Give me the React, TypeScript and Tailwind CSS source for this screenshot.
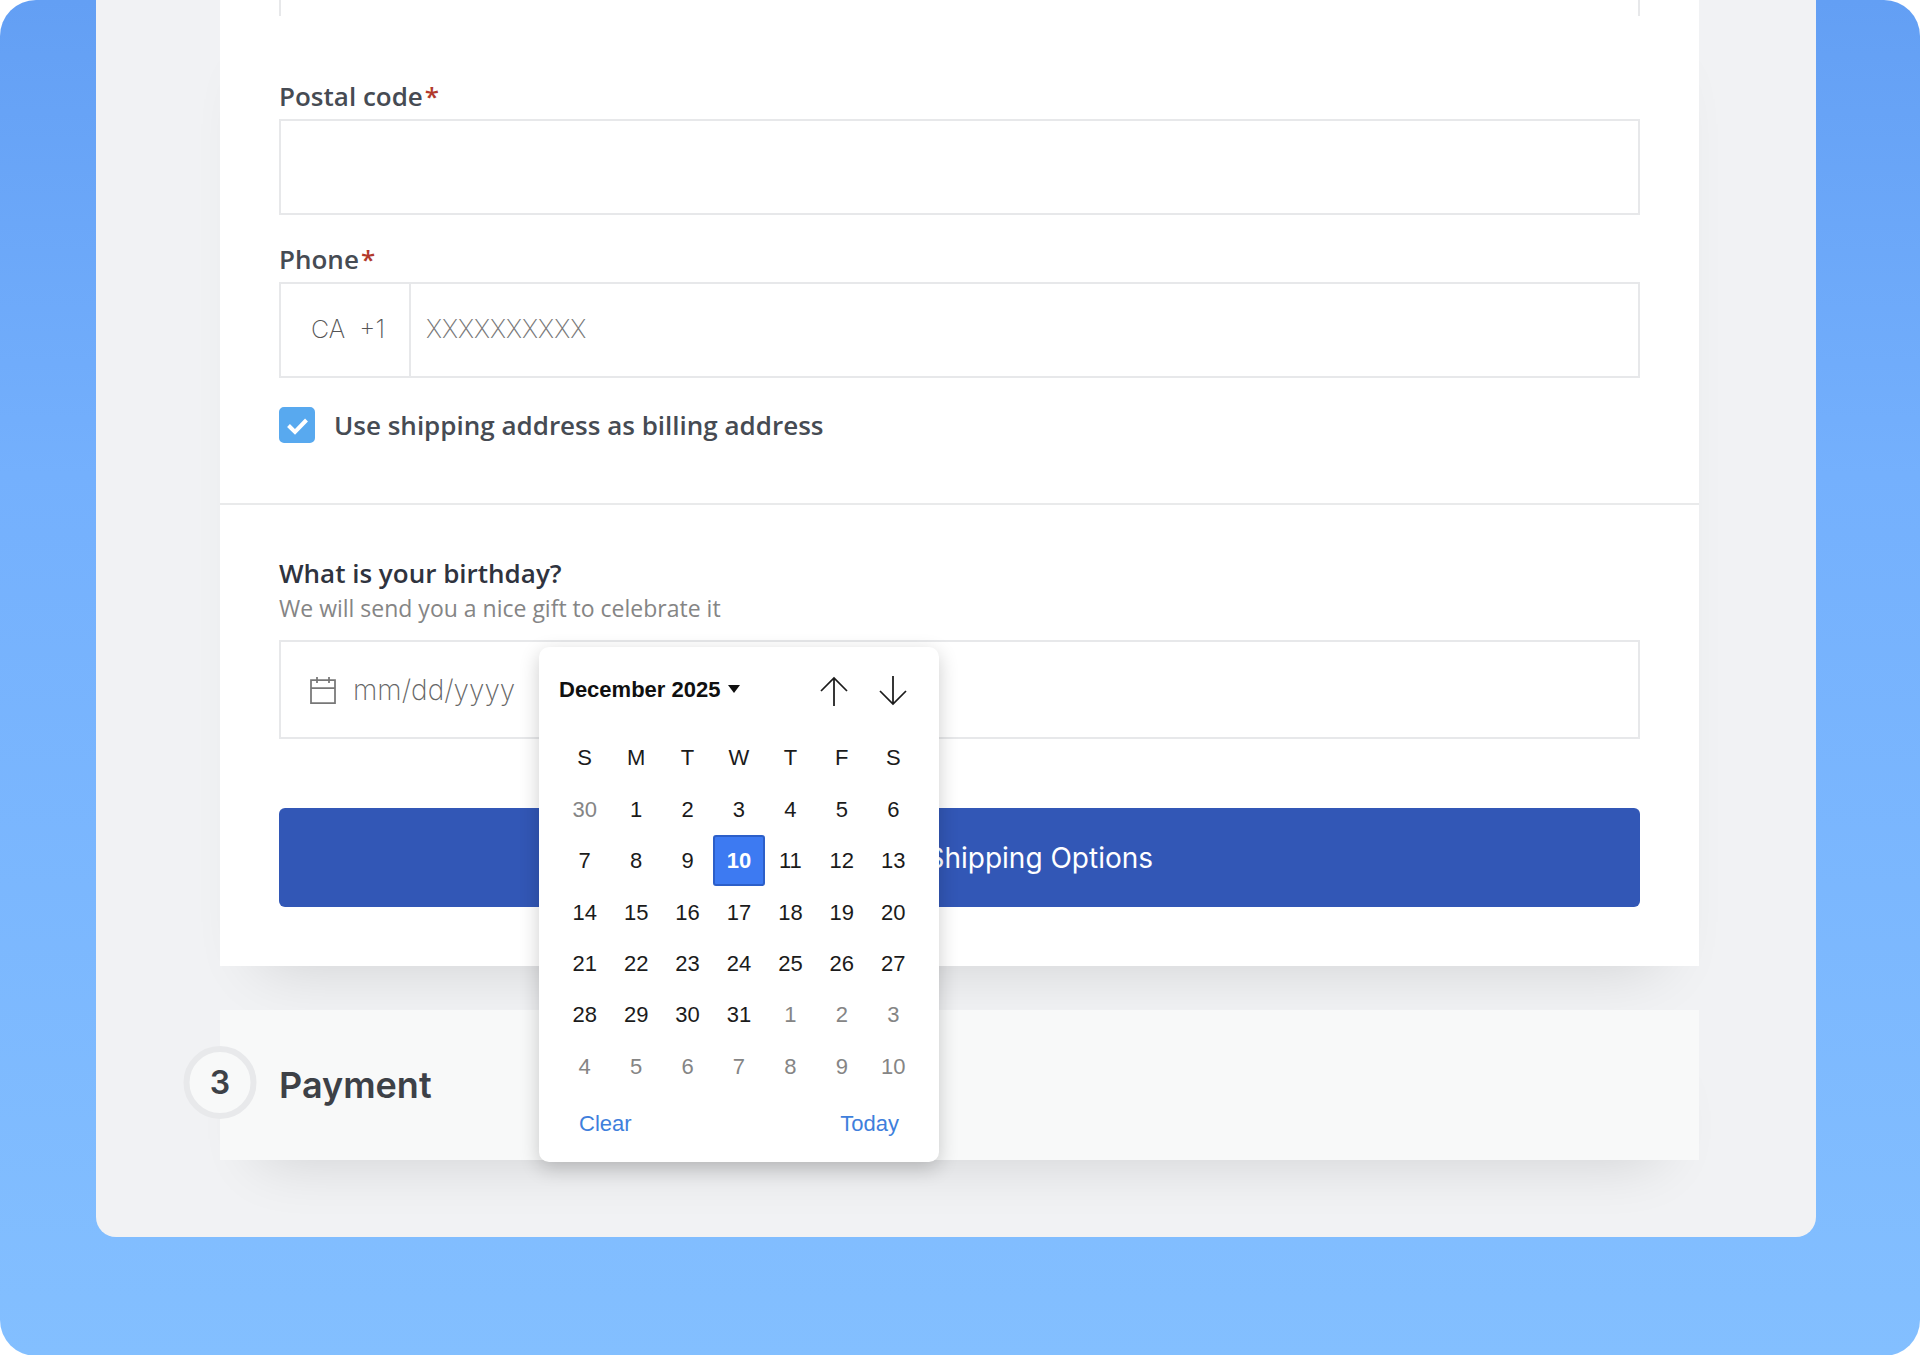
import { useState } from 'react';

const WEEKDAYS = ['S', 'M', 'T', 'W', 'T', 'F', 'S'];

const WEEKS = [
  [30, 1, 2, 3, 4, 5, 6],
  [7, 8, 9, 10, 11, 12, 13],
  [14, 15, 16, 17, 18, 19, 20],
  [21, 22, 23, 24, 25, 26, 27],
  [28, 29, 30, 31, 1, 2, 3],
  [4, 5, 6, 7, 8, 9, 10],
];

// leading days belong to November, trailing ones to January
function isOutside(week: number, day: number) {
  return (week === 0 && day > 7) || (week >= 4 && day < 15);
}

type FieldLabelProps = {
  htmlFor: string;
  text: string;
};

function FieldLabel({ htmlFor, text }: FieldLabelProps) {
  return (
    <label htmlFor={htmlFor} className="flex h-9 items-center gap-0.5 text-[26px] leading-9 font-semibold text-[#464b53]">
      <span>{text}</span>
      <span className="text-[#b23a2c]" aria-hidden="true">
        *
      </span>
    </label>
  );
}

function DatePicker() {
  const [selected, setSelected] = useState('1-10');

  return (
    <div
      role="dialog"
      aria-label="Choose date"
      className="absolute top-[7px] left-[260px] z-10 w-[400px] rounded-[10px] bg-white px-5 pb-5 font-['Liberation_Sans',Arial,sans-serif] text-[22px] text-[#1b1b1b] shadow-[0_6px_20px_rgba(0,0,0,0.2)]"
    >
      <div className="flex h-[84px] items-center justify-between">
        <button type="button" className="flex items-center gap-2 font-bold text-[#101010]">
          December 2025
          <svg width="12" height="8" viewBox="0 0 12 8" fill="currentColor" aria-hidden="true">
            <path d="M0 0h12L6 8z" />
          </svg>
        </button>
        <div className="flex gap-[31px] pt-1 pr-3">
          <button type="button" aria-label="Previous month">
            <svg width="28" height="30" viewBox="0 0 28 30" fill="none" stroke="currentColor" strokeWidth="1.75" aria-hidden="true">
              <path d="M14 30V2M1 15 14 2l13 13" />
            </svg>
          </button>
          <button type="button" aria-label="Next month">
            <svg width="28" height="30" viewBox="0 0 28 30" fill="none" stroke="currentColor" strokeWidth="1.75" aria-hidden="true">
              <path d="M14 0v28M1 15l13 13 13-13" />
            </svg>
          </button>
        </div>
      </div>

      <table className="h-[361px] w-full table-fixed border-collapse text-center">
        <thead>
          <tr className="h-[53px]">
            {WEEKDAYS.map((name, i) => (
              <th key={i} scope="col" className="p-0 font-normal">
                {name}
              </th>
            ))}
          </tr>
        </thead>
        <tbody>
          {WEEKS.map((days, week) => (
            <tr key={week} className="h-[51px]">
              {days.map((day) => {
                const id = `${week}-${day}`;
                const tone = isOutside(week, day) ? 'text-[#858585]' : '';
                const active = 'rounded-[3px] border-2 border-[#2c5fc9] bg-[#3d7af2] font-bold text-white';
                return (
                  <td key={id} className="p-0">
                    <button
                      type="button"
                      onClick={() => setSelected(id)}
                      className={`h-[51px] w-full ${selected === id ? active : tone}`}
                    >
                      {day}
                    </button>
                  </td>
                );
              })}
            </tr>
          ))}
        </tbody>
      </table>

      <div className="flex h-[50px] items-center justify-between px-5 pt-3 text-[#3f7fdc]">
        <button type="button">Clear</button>
        <button type="button">Today</button>
      </div>
    </div>
  );
}

export default function App() {
  const [sameAddress, setSameAddress] = useState(true);

  return (
    <div className="bg-white font-['Open_Sans','Noto_Sans',sans-serif]">
      <div className="min-h-screen rounded-[36px] bg-linear-to-b from-[#639ff4] via-[#74b0fd] via-35% to-[#83bfff] pr-[104px] pb-[119px] pl-24">
        <main className="rounded-b-[20px] bg-[#f1f2f4] pr-[117px] pb-[77px] pl-[124px]">
          <section className="bg-white pb-[59px] shadow-[0_40px_60px_-40px_rgba(0,0,0,0.14)]">
            <div className="px-[59px] pb-[60px]">
              <div className="h-4 border-x-2 border-[#e7e8ea]" />

              <div className="pt-[62px]">
                <FieldLabel htmlFor="postal" text="Postal code" />
                <input
                  id="postal"
                  type="text"
                  className="mt-[5px] block h-24 w-full border-2 border-[#e7e8ea] px-4 text-[26px] outline-none"
                />
              </div>

              <div className="pt-[26px]">
                <FieldLabel htmlFor="phone" text="Phone" />
                <div className="mt-[5px] flex h-24 border-2 border-[#e7e8ea] font-['Inter',sans-serif] text-[25px] font-extralight text-[#555]">
                  <div className="flex w-[130px] items-center justify-between border-r-2 border-[#e7e8ea] pr-6 pl-[30px]">
                    <span>CA</span>
                    <span>+1</span>
                  </div>
                  <input
                    id="phone"
                    type="tel"
                    placeholder="XXXXXXXXXX"
                    className="min-w-0 flex-1 px-[15px] outline-none placeholder:text-[#777]"
                  />
                </div>
              </div>

              <label className="mt-[29px] flex items-center gap-[19px] text-[26px] leading-9 font-semibold text-[#464b53]">
                <span className="relative size-9">
                  <input
                    type="checkbox"
                    checked={sameAddress}
                    onChange={(e) => setSameAddress(e.target.checked)}
                    className="peer block size-9 appearance-none rounded-[5px] border-2 border-[#58a9ef] checked:bg-[#58a9ef]"
                  />
                  <svg
                    viewBox="0 0 36 36"
                    fill="none"
                    stroke="white"
                    strokeWidth="4"
                    className="pointer-events-none absolute inset-0 hidden size-9 peer-checked:block"
                    aria-hidden="true"
                  >
                    <path d="M9.500 18.500 16 25l11.500-12" />
                  </svg>
                </span>
                Use shipping address as billing address
              </label>
            </div>

            <div className="border-t-2 border-[#e9eaeb] px-[59px] pt-[50px]">
              <label htmlFor="birthday" className="block text-[26px] leading-9 font-semibold text-[#2f333e]">
                What is your birthday?
              </label>
              <p className="text-[23px] leading-[34px] text-[#858585]">We will send you a nice gift to celebrate it</p>

              <div className="relative mt-[15px]">
                <div className="flex h-[99px] items-center gap-4 border-2 border-[#e7e8ea] pl-7">
                  <svg width="28" height="28" viewBox="0 0 28 28" fill="none" stroke="#777" strokeWidth="1.75" aria-hidden="true">
                    <path d="M2 4h24v23H2zM2 12h24M8 1v6M20 1v6" />
                  </svg>
                  <input
                    id="birthday"
                    type="text"
                    placeholder="mm/dd/yyyy"
                    className="min-w-0 flex-1 font-['Inter',sans-serif] text-[28px] font-extralight outline-none placeholder:text-[#666]"
                  />
                </div>
                <DatePicker />
              </div>

              <button
                type="button"
                className="mt-[69px] block h-[99px] w-full rounded-md bg-[#3257b6] font-['Inter',sans-serif] text-[28px] text-white"
              >
                Continue to Shipping Options
              </button>
            </div>
          </section>

          <section className="relative mt-11 flex h-[150px] items-center bg-[#f8f9f9] px-[59px] font-['Inter',sans-serif] font-semibold text-[#3d4147] shadow-[0_40px_60px_-40px_rgba(0,0,0,0.14)]">
            <span className="absolute top-9 left-0 flex size-[73px] -translate-x-1/2 items-center justify-center rounded-full border-6 border-[#e8e9eb] bg-[#f8f9f9] text-[32px]">
              3
            </span>
            <h2 className="text-[36px]">Payment</h2>
          </section>
        </main>
      </div>
    </div>
  );
}
